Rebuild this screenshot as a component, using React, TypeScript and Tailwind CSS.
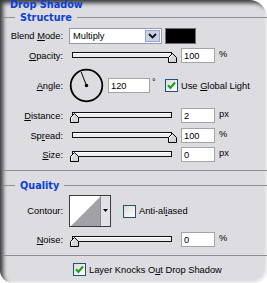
import type { ReactNode } from 'react';

const ui = "font-['Liberation_Sans',Arial,sans-serif] text-[9.3px] text-black";
const blue = "font-['DejaVu_Sans',sans-serif] font-bold text-[9.7px] text-[#0b3fd4]";

function Label({ children }: { children: ReactNode }) {
    return <div className="w-[59px] shrink-0 text-right leading-[12px]">{children}</div>;
}

function Legend({ children }: { children: ReactNode }) {
    return (
        <div className={`-mt-[6px] ml-[11px] h-[12px] w-fit bg-[#dcdce1] px-[5px] leading-[12px] ${blue}`}>
            {children}
        </div>
    );
}

function Check({ checked }: { checked?: boolean }) {
    return (
        <div className="flex h-[13px] w-[13px] shrink-0 items-center justify-center border border-[#1c5180] bg-gradient-to-br from-[#dcdcd7] to-white">
            {checked && (
                <svg width="9" height="9" viewBox="0 0 9 9">
                    <path d="M1 4.3 L3.4 6.8 L8 1.6" fill="none" stroke="#21a121" strokeWidth="2.2" />
                </svg>
            )}
        </div>
    );
}

function Slider({ at }: { at: 'start' | 'end' }) {
    const pos = at === 'start' ? 'left-[1px]' : 'left-[99px]';
    return (
        <div className="relative ml-[6px] h-[15px] w-[107px] shrink-0">
            <div className="ml-[3px] mt-[4px] h-[6px] w-[100px] border border-[#111] bg-[#ececef] shadow-[inset_0_1px_0_#ffffff]" />
            <svg className={`absolute top-[5px] ${pos}`} width="9" height="10" viewBox="0 0 9 10">
                <path d="M0.5 9.5 V4.5 L4.5 0.5 L8.5 4.5 V9.5 Z" fill="#d6d6da" stroke="#000" />
                <path d="M1.5 8.5 V4.9 L4.5 1.9" fill="none" stroke="#fff" />
            </svg>
        </div>
    );
}

function Field({ value, w = 'w-[34px]', ml = 'ml-[5px]' }: { value: string; w?: string; ml?: string }) {
    return (
        <div className={`${ml} ${w} flex h-[15px] shrink-0 items-center border border-[#a3a3a8] bg-white pl-[2px] leading-[12px]`}>
            {value}
        </div>
    );
}

function SliderRow({ mt, label, at, value, unit }: { mt: string; label: ReactNode; at: 'start' | 'end'; value: string; unit: string }) {
    return (
        <div className={`${mt} flex h-[15px] items-center`}>
            <Label>{label}</Label>
            <Slider at={at} />
            <Field value={value} />
            <span className="mb-[4px] ml-[4px] leading-[10px]">{unit}</span>
        </div>
    );
}

export default function App() {
    return (
        <div className={`h-[283px] w-[267px] overflow-hidden bg-white ${ui}`}>
            <div className="h-full w-full overflow-hidden rounded-tr-[18px] rounded-br-[13px] rounded-bl-[13px] bg-[#dcdce1] shadow-[inset_4px_4px_4px_-1px_rgba(0,0,0,0.75),inset_-2px_-2px_3px_-1px_rgba(255,255,255,0.8)]">
                <div className={`h-[17px] pl-[10px] leading-[9px] ${blue}`}>Drop Shadow</div>

                {/* Structure */}
                <div className="ml-[3px] h-[154px] w-[280px] border-b border-l border-t border-[#8e8e93]">
                    <Legend>Structure</Legend>

                    <div className="mt-[4px] flex h-[16px] items-center">
                        <Label>
                            Blend <span className="underline">M</span>ode:
                        </Label>
                        <div className="ml-[6px] flex h-[16px] w-[93px] items-center border border-[#8b9bb4] bg-white">
                            <span className="flex-1 pl-[3px] leading-[12px]">Multiply</span>
                            <div className="mr-[1px] flex h-[12px] w-[15px] items-center justify-center border border-[#98a6c4] bg-[#c9d2e6]">
                                <svg width="9" height="6" viewBox="0 0 9 6">
                                    <path d="M1 1 L4.5 4.5 L8 1" fill="none" stroke="#111" strokeWidth="1.8" />
                                </svg>
                            </div>
                        </div>
                        <div className="ml-[3px] h-[16px] w-[31px] border border-[#6d6d70] bg-black" />
                    </div>

                    <SliderRow
                        mt="mt-[4px]"
                        label={<><span className="underline">O</span>pacity:</>}
                        at="end"
                        value="100"
                        unit="%"
                    />

                    <div className="mt-[5px] flex h-[35px] items-center">
                        <Label>
                            <span className="underline">A</span>ngle:
                        </Label>
                        <svg className="ml-[6px] shrink-0" width="35" height="35" viewBox="0 0 35 35">
                            <circle cx="17.5" cy="17.5" r="15.8" fill="none" stroke="#000" strokeWidth="1.8" />
                            <line x1="17.5" y1="17.5" x2="12.2" y2="4" stroke="#000" strokeWidth="1" />
                            <circle cx="17.5" cy="17.5" r="1.7" fill="#000" />
                        </svg>
                        <Field value="120" w="w-[42px]" ml="ml-[4px]" />
                        <span className="mb-[8px] w-[13px] pl-[2px] leading-[8px]">°</span>
                        <div className="ml-[2px]">
                            <Check checked />
                        </div>
                        <span className="ml-[3px] leading-[12px]">
                            Use <span className="underline">G</span>lobal Light
                        </span>
                    </div>

                    <SliderRow
                        mt="mt-[5px]"
                        label={<><span className="underline">D</span>istance:</>}
                        at="start"
                        value="2"
                        unit="px"
                    />
                    <SliderRow
                        mt="mt-[5px]"
                        label={<>Sp<span className="underline">r</span>ead:</>}
                        at="end"
                        value="100"
                        unit="%"
                    />
                    <SliderRow
                        mt="mt-[4px]"
                        label={<><span className="underline">S</span>ize:</>}
                        at="start"
                        value="0"
                        unit="px"
                    />
                </div>

                {/* Quality */}
                <div className="ml-[3px] mt-[14px] h-[71px] w-[280px] border-b border-l border-t border-[#8e8e93]">
                    <Legend>Quality</Legend>

                    <div className="mt-[3px] flex h-[32px] items-center">
                        <Label>Contour:</Label>
                        <div className="ml-[6px] flex h-[32px] w-[42px] shrink-0 border border-[#3c3c3f] bg-white">
                            <svg width="30" height="30" viewBox="0 0 30 30">
                                <polygon points="1,30 30,1 30,30" fill="#a2a2a6" />
                            </svg>
                            <div className="flex w-[10px] justify-center border-l border-[#8a8a8e] bg-[#e2e2e6] pt-[13px]">
                                <svg width="5" height="3" viewBox="0 0 5 3">
                                    <polygon points="0,0 5,0 2.5,3" fill="#000" />
                                </svg>
                            </div>
                        </div>
                        <div className="ml-[12px]">
                            <Check />
                        </div>
                        <span className="ml-[3px] leading-[12px]">
                            Anti-al<span className="underline">i</span>ased
                        </span>
                    </div>

                    <SliderRow
                        mt="mt-[5px]"
                        label={<><span className="underline">N</span>oise:</>}
                        at="start"
                        value="0"
                        unit="%"
                    />
                </div>

                <div className="ml-[73px] mt-[7px] flex h-[13px] items-center">
                    <Check checked />
                    <span className="ml-[3px] leading-[12px]">
                        Layer Knocks O<span className="underline">u</span>t Drop Shadow
                    </span>
                </div>
            </div>
        </div>
    );
}
